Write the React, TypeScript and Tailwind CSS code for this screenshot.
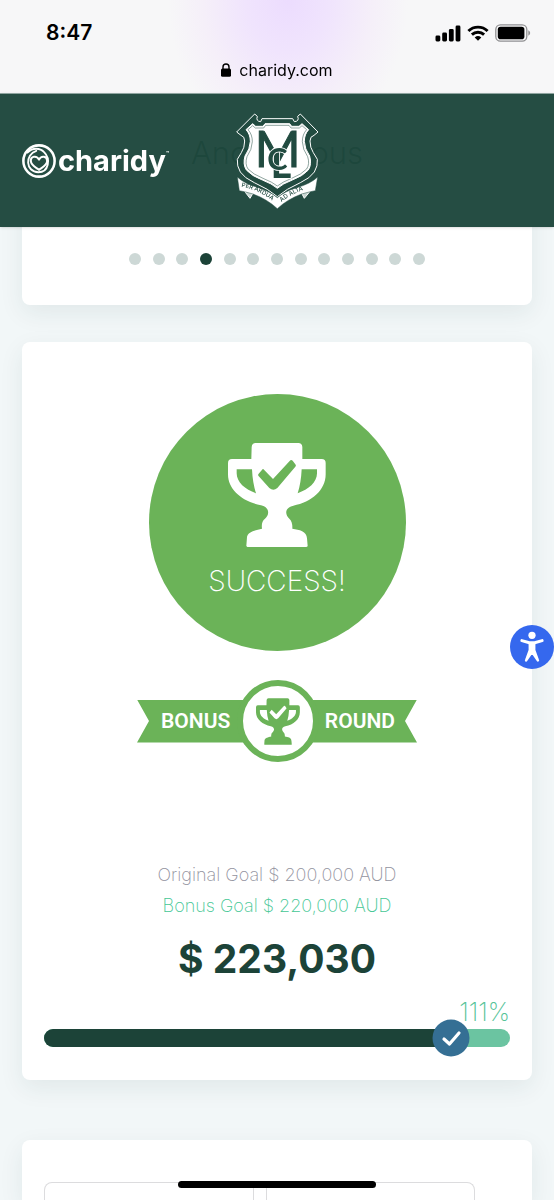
import React from "react";

function Trophy({ className, checkColor }: { className: string; checkColor: string }) {
  return (
    <svg viewBox="264 174 294 312" className={className} fill="currentColor" aria-hidden="true">
      <path
        fillRule="evenodd"
        d="M347 174H475Q486 174 487 186V222H545Q557 222 557 234V268C557 315 515 352 460 362C434 368 434 388 448 401Q458 410 457 431C478 434 500 438 501 460L503 483Q502 486 498 486H322L319 483L321 456C324 440 345 436 366 431Q363 410 375 401C390 388 388 366 363 361C308 350 264 315 264 268V234Q264 222 276 222H334L335 186Q336 174 347 174ZM290 253V265C290 292 315 313 348 325Q338 295 336 253ZM531 253H485Q483 295 473 325C506 313 531 292 531 265Z"
      />
      <path
        fill={checkColor}
        d="M369 251L399 282L449 228Q453 223 458 227L467 239Q469 242 466 245L412 309Q400 320 388 309L355 272Q353 269 356 266Z"
      />
    </svg>
  );
}

function StatusBar() {
  return (
    <div className="flex h-[93px] flex-col bg-[#f7f7f8] bg-[radial-gradient(ellipse_120px_150px_at_52%_0%,#ecdcfe_0%,#f0e4fd_35%,#f5eff9_70%,#f7f7f8_100%)] text-black">
      <div className="flex items-center justify-between pt-[18px] pr-[23px] pl-[46px]">
        <span className="text-[21px] leading-[30px] font-semibold">8:47</span>
        <div className="flex items-center gap-[6px]">
          <svg viewBox="0 0 26 17" className="h-[17px] w-[26px]" aria-hidden="true">
            <rect x="0.5" y="10.5" width="4.8" height="6" rx="1.4" />
            <rect x="7.2" y="7.5" width="4.8" height="9" rx="1.4" />
            <rect x="13.9" y="4" width="4.8" height="12.5" rx="1.4" />
            <rect x="20.6" y="0.5" width="4.8" height="16" rx="1.4" />
          </svg>
          <svg viewBox="0 0 22 16" className="h-4 w-[22px]" fill="none" stroke="#000" strokeWidth="2.9" aria-hidden="true">
            <path d="M1.4 6a13.8 13.8 0 0 1 19.2 0" />
            <path d="M4.9 9.6a8.9 8.9 0 0 1 12.2 0" />
            <path d="M7.7 12.5a5 5 0 0 1 6.6 0L11 15.8z" fill="#000" stroke="none" />
          </svg>
          <svg viewBox="0 0 36 18" className="h-[18px] w-9" aria-hidden="true">
            <rect x="0.8" y="0.8" width="31" height="16.4" rx="4.6" fill="none" stroke="#909092" strokeWidth="1.3" />
            <rect x="2.8" y="2.8" width="26.6" height="12.4" rx="2.8" />
            <path d="M33.3 6.3q1.9.9 1.9 2.7t-1.9 2.7z" fill="#909092" />
          </svg>
        </div>
      </div>
      <div className="mt-[10px] flex items-center justify-center gap-2 text-[16px] leading-6">
        <svg viewBox="0 0 10 14" className="h-[14px] w-[10px]" aria-hidden="true">
          <rect x="0" y="5.6" width="10" height="8.2" rx="1.5" />
          <path d="M2 6.5V4a3 3 0 0 1 6 0v2.5" fill="none" stroke="#000" strokeWidth="1.4" />
        </svg>
        <span>charidy.com</span>
      </div>
    </div>
  );
}

function CharidyLogo() {
  return (
    <a href="#home" aria-label="charidy" className="flex items-center gap-[2px] text-white">
      <svg viewBox="66 160 100 106" className="h-9 w-[34px]" fill="none" stroke="currentColor" strokeLinecap="round" strokeLinejoin="round" aria-hidden="true">
        <circle cx="116" cy="213" r="46" strokeWidth="7.5" />
        <path d="M82 188C98 173 119 174 131 187C151 207 145 246 114 246C76 245 74 194 108 183" strokeWidth="5.5" />
        <path d="M116 209C109 195 91 199 92 213C92 225 105 231 116 239C127 231 140 225 140 213C140 199 123 195 116 209Z" strokeWidth="6" />
      </svg>
      <span className="flex text-[29px] leading-9 font-bold">
        charidy<span className="mt-1 text-[5px] leading-3">™</span>
      </span>
    </a>
  );
}

function Crest() {
  return (
    <svg viewBox="50 48 252 294" className="h-[98px] w-[84px]" role="img" aria-label="School crest">
      <path d="M74 280L95 307L106 288ZM280 280L258 307L248 288Z" fill="#c9d6d2" stroke="#fff" strokeWidth="3" />
      <path
        d="M55 108L109 54L117 61Q112 76 127 77L131 68H223L228 77Q244 76 238 61L246 54L299 108L287 118Q275 121 275 135Q275 155 285 170L297 190Q299 210 288 228Q276 246 246 260Q203 279 177 302Q151 279 108 260Q78 246 66 228Q55 210 57 190L69 170Q79 155 79 135Q79 121 68 118Z"
        fill="#214b40" stroke="#fff" strokeWidth="3"
      />
      <path
        d="M83 101L103 83L112 91H134L140 83H214L220 91H242L251 83L271 101Q258 115 258 136Q259 159 274 180Q281 205 270 222Q254 240 222 252Q193 263 177 277Q161 263 132 252Q100 240 84 222Q73 205 80 180Q95 159 96 136Q96 115 83 101Z"
        fill="#fff" stroke="#fff" strokeWidth="3"
      />
      <path
        d="M89 101L103 89L111 96H136L142 88H212L218 96H243L251 89L265 101Q252 115 252 137Q253 161 268 182Q275 204 265 219Q250 235 220 247Q192 258 177 270Q162 258 134 247Q104 235 89 219Q79 204 86 182Q101 161 102 137Q102 115 89 101Z"
        fill="none" stroke="#214b40" strokeWidth="1.5"
      />
      <g fill="#214b40" textAnchor="middle" fontFamily="Lato, sans-serif">
        <text x="178" y="212" fontSize="148" fontWeight="400" stroke="#214b40" strokeWidth="3">M</text>
        <g stroke="#fff" strokeWidth="5" paintOrder="stroke" fontWeight="700">
          <text x="188" y="245" fontSize="120">L</text>
          <text x="177" y="221" fontSize="92">C</text>
        </g>
      </g>
      <path
        d="M57 243Q78 263 120 275Q155 286 177 305Q199 286 235 275Q277 263 298 243L291 284Q274 287 250 294Q207 310 177 338Q147 310 104 294Q80 287 63 284Z"
        fill="#fff" stroke="#214b40" strokeWidth="1.5"
      />
      <defs>
        <path id="motto-left" d="M69 272Q132 284 174 325" />
        <path id="motto-right" d="M190 318Q226 287 284 274" />
      </defs>
      <g fill="#214b40" fontFamily="Inter, sans-serif" fontSize="18" fontWeight="500">
        <text><textPath href="#motto-left">PER ARDUA</textPath></text>
        <text><textPath href="#motto-right">AD ALTA</textPath></text>
      </g>
    </svg>
  );
}

function Header() {
  return (
    <header className="fixed inset-x-0 top-0 z-20">
      <StatusBar />
      <div className="grid h-[134px] grid-cols-[1fr_auto_1fr] items-center border-t border-[#8fa5a0] bg-[#1e473d]/97 px-[22px] shadow-sm">
        <CharidyLogo />
        <Crest />
      </div>
    </header>
  );
}

function Dots() {
  return (
    <div className="mx-auto flex w-[296px] justify-between">
      {Array.from({ length: 13 }, (_, i) => (
        <button
          key={i}
          type="button"
          aria-label={`Slide ${i + 1}`}
          className={i === 3 ? "size-3 rounded-full bg-[#1c4338]" : "size-3 rounded-full bg-[#cdd8d6]"}
        />
      ))}
    </div>
  );
}

function BonusRibbon() {
  return (
    <div className="mx-auto mt-[29px] flex w-[280px] items-center font-['Roboto',sans-serif] text-[21px] leading-[43px] font-semibold text-white">
      <div className="-mr-2 h-[43px] flex-1 bg-[#6bb358] pl-6 text-left [clip-path:polygon(0_0,100%_0,100%_100%,0_100%,12px_50%)]">
        BONUS
      </div>
      <div className="z-10 flex size-[82px] items-center justify-center rounded-full border-[6px] border-[#6bb358] bg-white text-[#6bb358]">
        <Trophy className="h-[47px] w-11" checkColor="#fff" />
      </div>
      <div className="-ml-2 h-[43px] flex-1 bg-[#6bb358] pr-[22px] text-right [clip-path:polygon(0_0,100%_0,calc(100%-12px)_50%,100%_100%,0_100%)]">
        ROUND
      </div>
    </div>
  );
}

function Progress() {
  return (
    <div className="relative mt-[5px] h-[18px] rounded-full bg-[#6bc4a1]">
      <div className="h-full w-[calc(100%-59px)] rounded-l-full bg-[#1c4338]" />
      <div className="absolute top-1/2 left-[calc(100%-59px)] flex size-[37px] -translate-1/2 items-center justify-center rounded-full bg-[#356f94]">
        <svg viewBox="0 0 20 16" className="h-4 w-5" fill="none" stroke="#fff" strokeWidth="3.2" strokeLinecap="round" strokeLinejoin="round" aria-hidden="true">
          <path d="M2.5 8.5L8 13.500L17.500 2.500" />
        </svg>
      </div>
    </div>
  );
}

const card = "bg-white shadow-[0_8px_24px_rgba(30,60,70,0.08)]";

export default function App() {
  return (
    <div className="flex min-h-screen flex-col overflow-x-hidden bg-[#f2f7f8] px-[22px] font-['Inter',sans-serif]">
      <Header />
      <main className="flex flex-1 flex-col pt-[93px]">
        <section className={`rounded-b-lg pt-10 pb-10 ${card}`}>
          <h2 className="text-center text-[31px] leading-10 font-light text-[#1c4338]">Anonymous</h2>
          <div className="pt-20">
            <Dots />
          </div>
        </section>

        <section className={`mt-[37px] rounded-lg px-[22px] pt-[52px] pb-[33px] text-center ${card}`}>
          <div className="mx-auto flex size-[257px] flex-col items-center rounded-full bg-[#6bb358] pt-[49px] text-white">
            <Trophy className="h-[104px] w-[98px]" checkColor="#6bb358" />
            <p className="mt-[18px] text-[28px] leading-8 font-extralight">SUCCESS!</p>
          </div>
          <BonusRibbon />
          <p className="mt-[97px] text-[18px] leading-[31px] font-extralight text-[#92929e]">Original Goal $ 200,000 AUD</p>
          <p className="text-[18px] leading-[31px] font-extralight text-[#45c795]">Bonus Goal $ 220,000 AUD</p>
          <p className="mt-4 text-[39px] leading-[44px] font-bold text-[#1c4338]">$ 223,030</p>
          <p className="mt-[19px] text-right text-[25px] leading-6 font-extralight text-[#55c398]">111%</p>
          <Progress />
        </section>

        <section className={`mt-[60px] flex flex-1 gap-3 rounded-t-lg pt-[42px] pr-[57px] pl-[22px] ${card}`}>
          <div className="flex-1 rounded-tl-lg border border-b-0 border-[#dcdcde]" />
          <div className="flex-1 rounded-tr-lg border border-b-0 border-[#dcdcde]" />
        </section>
      </main>

      <button
        type="button"
        aria-label="Accessibility options"
        className="fixed top-[625px] right-0 z-10 flex size-11 items-center justify-center rounded-full bg-[#3568ee]"
      >
        <svg viewBox="0 0 24 30" className="h-8 w-[26px]" fill="#fff" stroke="#fff" strokeLinecap="round" strokeLinejoin="round" aria-hidden="true">
          <circle cx="12" cy="4" r="3.4" stroke="none" />
          <path d="M2.5 9L9.5 11H14.5L21.5 9" fill="none" strokeWidth="2.8" />
          <path d="M10 11.500H14V18L17.500 27.500L12 19.500L6.500 27.500L10 18Z" strokeWidth="2.4" />
        </svg>
      </button>
      <div className="fixed bottom-3 left-1/2 z-20 h-[7px] w-[198px] -translate-x-1/2 rounded-full bg-black" />
    </div>
  );
}
